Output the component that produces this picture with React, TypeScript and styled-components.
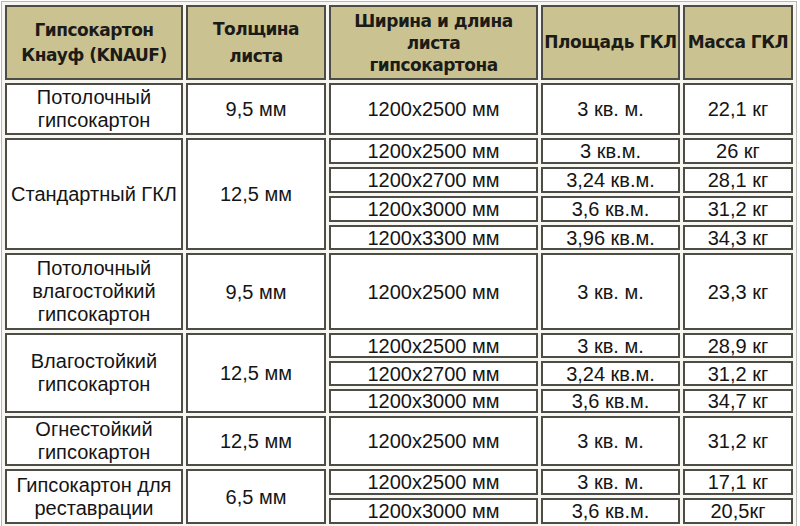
import React from "react";
import styled, { createGlobalStyle } from "styled-components";

const GlobalStyle = createGlobalStyle`
    html, body {
        margin: 0;
        padding: 0;
        background: #ffffff;
    }
    body {
        font-family: "Liberation Sans", Arial, sans-serif;
        color: #151515;
    }
`;

const Wrap = styled.div`
    padding: 1px;
    width: 798px;
    box-sizing: border-box;
`;

const Table = styled.table`
    width: 796px;
    table-layout: fixed;
    border-collapse: separate;
    border-spacing: 3px;
    border: 1px solid #b9b9b4;
    background: #f7f6f1;
`;

const HeadCell = styled.th<{ $lh?: number }>`
    height: 75px;
    padding: 0;
    background: #cbc292;
    border: 2px solid #4d4d48;
    font-family: "DejaVu Sans", sans-serif;
    font-weight: bold;
    font-size: 17px;
    letter-spacing: -0.5px;
    line-height: ${(p) => p.$lh ?? 23}px;
    color: #1b1b18;
    text-align: center;
    vertical-align: middle;
    white-space: nowrap;
    box-sizing: border-box;
`;

const Row = styled.tr<{ $h: number }>`
    height: ${(p) => p.$h}px;
`;

const Cell = styled.td<{ $lh?: number }>`
    padding: 0;
    background: #ffffff;
    border: 2px solid #4d4d48;
    font-size: 20px;
    line-height: ${(p) => p.$lh ?? 20}px;
    text-align: center;
    vertical-align: middle;
    white-space: nowrap;
    overflow: hidden;
    box-sizing: border-box;
`;

type Group = {
    name: string[];
    thick: string;
    rows: string[][];
    h: number[];
};

const groups: Group[] = [
    {
        name: ["Потолочный", "гипсокартон"],
        thick: "9,5 мм",
        rows: [["1200x2500 мм", "3 кв. м.", "22,1 кг"]],
        h: [52],
    },
    {
        name: ["Стандартный ГКЛ"],
        thick: "12,5 мм",
        rows: [
            ["1200x2500 мм", "3 кв.м.", "26 кг"],
            ["1200x2700 мм", "3,24 кв.м.", "28,1 кг"],
            ["1200x3000 мм", "3,6 кв.м.", "31,2 кг"],
            ["1200x3300 мм", "3,96 кв.м.", "34,3 кг"],
        ],
        h: [26, 26, 26, 25],
    },
    {
        name: ["Потолочный", "влагостойкий", "гипсокартон"],
        thick: "9,5 мм",
        rows: [["1200x2500 мм", "3 кв. м.", "23,3 кг"]],
        h: [77],
    },
    {
        name: ["Влагостойкий", "гипсокартон"],
        thick: "12,5 мм",
        rows: [
            ["1200x2500 мм", "3 кв. м.", "28,9 кг"],
            ["1200x2700 мм", "3,24 кв.м.", "31,2 кг"],
            ["1200x3000 мм", "3,6 кв.м.", "34,7 кг"],
        ],
        h: [25, 25, 24],
    },
    {
        name: ["Огнестойкий", "гипсокартон"],
        thick: "12,5 мм",
        rows: [["1200x2500 мм", "3 кв. м.", "31,2 кг"]],
        h: [49],
    },
    {
        name: ["Гипсокартон для", "реставрации"],
        thick: "6,5 мм",
        rows: [
            ["1200x2500 мм", "3 кв. м.", "17,1 кг"],
            ["1200x3000 мм", "3,6 кв.м.", "20,5кг"],
        ],
        h: [26, 26],
    },
];

const lines = (arr: string[]) =>
    arr.map((t, i) => (
        <React.Fragment key={i}>
            {i > 0 && <br />}
            {t}
        </React.Fragment>
    ));

export default function App() {
    return (
        <Wrap>
            <GlobalStyle />
            <Table>
                <colgroup>
                    <col style={{ width: 178 }} />
                    <col style={{ width: 140 }} />
                    <col style={{ width: 209 }} />
                    <col style={{ width: 139 }} />
                    <col style={{ width: 110 }} />
                </colgroup>
                <thead>
                    <tr>
                        <HeadCell $lh={25}>{lines(["Гипсокартон", "Кнауф (KNAUF)"])}</HeadCell>
                        <HeadCell $lh={27}>{lines(["Толщина", "листа"])}</HeadCell>
                        <HeadCell $lh={22}>{lines(["Ширина и длина", "листа", "гипсокартона"])}</HeadCell>
                        <HeadCell>Площадь ГКЛ</HeadCell>
                        <HeadCell>Масса ГКЛ</HeadCell>
                    </tr>
                </thead>
                <tbody>
                    {groups.map((g, gi) =>
                        g.rows.map((r, ri) => (
                            <Row key={`${gi}-${ri}`} $h={g.h[ri]}>
                                {ri === 0 && (
                                    <>
                                        <Cell $lh={23} rowSpan={g.rows.length}>{lines(g.name)}</Cell>
                                        <Cell rowSpan={g.rows.length}>{g.thick}</Cell>
                                    </>
                                )}
                                {r.map((c, ci) => (
                                    <Cell key={ci}>{c}</Cell>
                                ))}
                            </Row>
                        ))
                    )}
                </tbody>
            </Table>
        </Wrap>
    );
}
